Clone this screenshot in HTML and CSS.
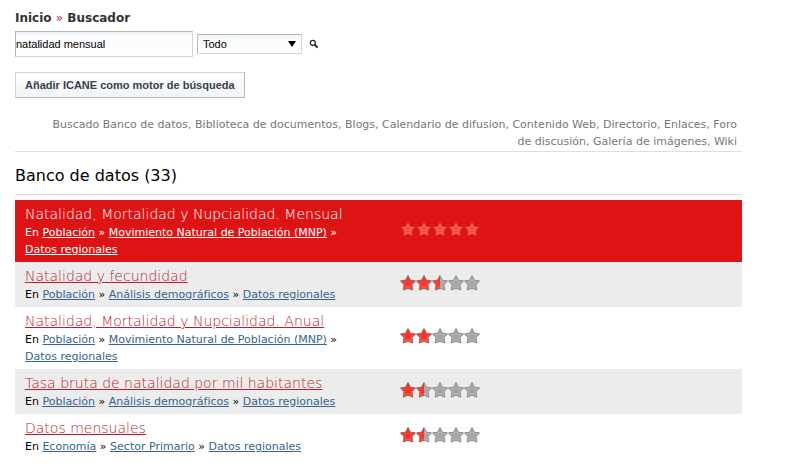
FILE: index.html
```html
<!DOCTYPE html>
<html lang="es">
<head>
    <meta charset="utf-8">
    <title>Buscador</title>
    <link rel="stylesheet" href="styles.css">
</head>
<body>
    <svg class="defs" width="0" height="0">
        <defs>
            <linearGradient id="red" x1="0" y1="0" x2="0" y2="1">
                <stop offset="0" stop-color="#e6302c"/>
                <stop offset="1" stop-color="#ff5e4e"/>
            </linearGradient>
            <path id="star" d="M8 .6L10.400 5.200 15.500 5.900 12 9.700 12.800 15 8 13.300 3.200 15 4 9.700 .5 5.900 5.600 5.200z" stroke-linejoin="round"/>
            <path id="core" d="M8 4l1.400 2.900 3 .4-2.200 2 .6 3L8 11.100l-2.800 1.200.6-3-2.200-2 3-.4z"/>
            <g id="on">
                <use href="#star" fill="url(#red)" stroke="#a45a55"/>
                <use href="#core" fill="#f5352d"/>
            </g>
            <g id="off">
                <use href="#star" fill="#b2b2b2" stroke="#8a8a8a"/>
                <use href="#core" fill="#a3a3a3"/>
            </g>
            <g id="faded">
                <use href="#star" fill="#fa604c" stroke="#c22a22"/>
                <use href="#core" fill="#f84c3a"/>
            </g>
            <clipPath id="left"><rect width="8" height="16"/></clipPath>
            <clipPath id="right"><rect x="8" width="8" height="16"/></clipPath>
            <g id="half">
                <g clip-path="url(#left)"><use href="#on"/></g>
                <g clip-path="url(#right)"><use href="#off"/></g>
            </g>
        </defs>
    </svg>

    <div class="container">
        <nav class="breadcrumb">Inicio <span>»</span> Buscador</nav>

        <form class="search">
            <input type="text" class="search-text" value="natalidad mensual" aria-label="Buscar">
            <span class="select">
                <select aria-label="Ámbito">
                    <option>Todo</option>
                </select>
            </span>
            <button type="submit" class="search-btn" aria-label="Buscar">
                <svg width="10" height="10" viewBox="0 0 10 10">
                    <circle cx="3.800" cy="3.800" r="2.500" fill="#fff" stroke="#222" stroke-width="1.300"/>
                    <path d="M5.800 5.800L8.600 8.600" stroke="#222" stroke-width="2"/>
                </svg>
            </button>
        </form>

        <button type="button" class="add-btn">Añadir ICANE como motor de búsqueda</button>

        <p class="searched">Buscado Banco de datos, Biblioteca de documentos, Blogs, Calendario de difusion, Contenido Web, Directorio, Enlaces, Foro de discusión, Galería de imágenes, Wiki</p>

        <h2>Banco de datos (33)</h2>

        <ul class="results">
            <li class="selected">
                <div class="info">
                    <a class="title" href="#">Natalidad, Mortalidad y Nupcialidad. Mensual</a>
                    <p>En <a href="#">Población</a> » <a href="#">Movimiento Natural de Población (MNP)</a> » <a href="#">Datos regionales</a></p>
                </div>
                <svg class="stars" width="80" height="16" viewBox="0 0 80 16">
                    <use href="#faded"/><use href="#faded" x="16"/><use href="#faded" x="32"/><use href="#faded" x="48"/><use href="#faded" x="64"/>
                </svg>
            </li>
            <li>
                <div class="info">
                    <a class="title" href="#">Natalidad y fecundidad</a>
                    <p>En <a href="#">Población</a> » <a href="#">Análisis demográficos</a> » <a href="#">Datos regionales</a></p>
                </div>
                <svg class="stars" width="80" height="16" viewBox="0 0 80 16">
                    <use href="#on"/><use href="#on" x="16"/><use href="#half" x="32"/><use href="#off" x="48"/><use href="#off" x="64"/>
                </svg>
            </li>
            <li>
                <div class="info">
                    <a class="title" href="#">Natalidad, Mortalidad y Nupcialidad. Anual</a>
                    <p>En <a href="#">Población</a> » <a href="#">Movimiento Natural de Población (MNP)</a> » <a href="#">Datos regionales</a></p>
                </div>
                <svg class="stars" width="80" height="16" viewBox="0 0 80 16">
                    <use href="#on"/><use href="#on" x="16"/><use href="#off" x="32"/><use href="#off" x="48"/><use href="#off" x="64"/>
                </svg>
            </li>
            <li>
                <div class="info">
                    <a class="title" href="#">Tasa bruta de natalidad por mil habitantes</a>
                    <p>En <a href="#">Población</a> » <a href="#">Análisis demográficos</a> » <a href="#">Datos regionales</a></p>
                </div>
                <svg class="stars" width="80" height="16" viewBox="0 0 80 16">
                    <use href="#on"/><use href="#half" x="16"/><use href="#off" x="32"/><use href="#off" x="48"/><use href="#off" x="64"/>
                </svg>
            </li>
            <li>
                <div class="info">
                    <a class="title" href="#">Datos mensuales</a>
                    <p>En <a href="#">Economía</a> » <a href="#">Sector Primario</a> » <a href="#">Datos regionales</a></p>
                </div>
                <svg class="stars" width="80" height="16" viewBox="0 0 80 16">
                    <use href="#on"/><use href="#half" x="16"/><use href="#off" x="32"/><use href="#off" x="48"/><use href="#off" x="64"/>
                </svg>
            </li>
        </ul>
    </div>
</body>
</html>
```

FILE: styles.css
```css
body {
    margin: 0;
    background: #fff;
    color: #000;
    font-family: Verdana, "DejaVu Sans", sans-serif;
    font-size: 11px;
    line-height: 17px;
}

.defs {
    position: absolute;
}

.container {
    margin: 0 45px 0 15px;
    padding-top: 10px;
}

.breadcrumb {
    color: #333;
    font-size: 12px;
    font-weight: bold;
}

.breadcrumb span {
    color: #c2283a;
    font-weight: normal;
}

.search {
    display: flex;
    align-items: center;
    gap: 4px;
    margin-top: 4px;
}

.search-text,
.select select {
    box-sizing: border-box;
    border: 1px solid #d4d4d4;
    border-top-color: #b4b8bb;
    border-left-color: #b4b8bb;
    border-radius: 0;
    background: linear-gradient(#eef1f4, #f9fbfc 4px, #fff);
    color: #000;
    font-family: "Liberation Sans", Arial, sans-serif;
    font-size: 11px;
}

.search-text {
    width: 178px;
    height: 26px;
    padding: 0;
}

.select {
    position: relative;
}

.select select {
    display: block;
    width: 105px;
    height: 20px;
    padding: 0 5px;
    appearance: none;
}

.select::after {
    content: "";
    position: absolute;
    top: 7px;
    right: 6px;
    border: 4px solid transparent;
    border-top: 6px solid #000;
    border-bottom: 0;
    pointer-events: none;
}

.search-btn {
    display: flex;
    margin-left: 3px;
    padding: 0;
    border: 0;
    background: none;
}

.add-btn {
    display: block;
    height: 26px;
    margin-top: 15px;
    padding: 0 9px;
    border: 1px solid #d4d4d4;
    border-right-color: #b8b8b8;
    border-bottom-color: #b8b8b8;
    background: linear-gradient(#fff, #f1f4f7);
    color: #34404f;
    font: bold 11px "Liberation Sans", Arial, sans-serif;
}

.searched {
    margin: 18px 0 0;
    padding: 0 5px 1px 30px;
    border-bottom: 1px solid #dedede;
    color: #777;
    text-align: right;
}

h2 {
    margin: 13px 0 5px;
    padding-bottom: 7px;
    border-bottom: 1px solid #dedada;
    font-size: 16px;
    font-weight: normal;
    line-height: 22px;
}

.results {
    margin: 0;
    padding: 0;
    list-style: none;
}

.results li {
    display: flex;
    align-items: center;
}

.results li:nth-child(even) {
    background: #ececec;
}

.info {
    box-sizing: border-box;
    width: 53%;
    padding: 4px 36px 4px 10px;
}

.info p {
    margin: 0;
}

.info a {
    color: #36648f;
}

.info .title {
    display: block;
    color: #c01a2b;
    font-family: "DejaVu Sans Light", "DejaVu Sans", sans-serif;
    font-size: 14px;
    font-weight: 200;
    line-height: 20px;
}

.stars {
    margin-bottom: 4px;
}

.results .selected {
    background: #de1414;
    color: #fff;
}

.selected .info a {
    color: #fff;
}

.selected .info .title {
    text-decoration: none;
}
```
